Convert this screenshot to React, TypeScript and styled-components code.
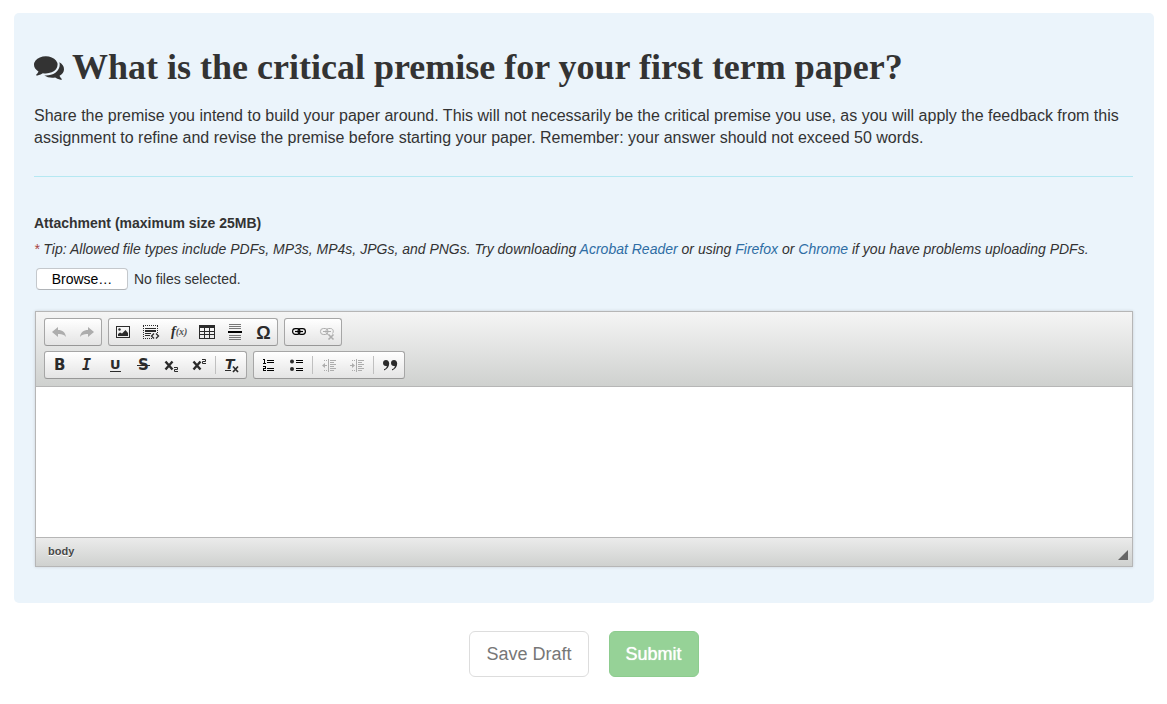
import React from "react";
import styled, { createGlobalStyle } from "styled-components";

const sans = `"Liberation Sans", Arial, sans-serif`;

const GlobalStyle = createGlobalStyle`
  *, *::before, *::after { box-sizing: border-box; }
  body {
    margin: 0;
    background: #fff;
    color: #333;
    font: 14px/22px ${sans};
  }
`;

const Page = styled.main`
  padding: 13px 13px 28px 14px;
`;

const Panel = styled.section`
  padding: 34px 21px 36px 20px;
  border-radius: 5px;
  background: #ebf4fb;
`;

const Title = styled.h1`
  display: flex;
  align-items: center;
  gap: 8px;
  margin: 0;
  font: bold 36px/40px "Liberation Serif", "Times New Roman", serif;
`;

const TitleIcon = styled.svg`
  flex: none;
  width: 30px;
  height: 30px;
  fill: #333;
`;

const Prompt = styled.p`
  margin: 18px 0 27px;
  font-size: 16px;
`;

const Divider = styled.hr`
  height: 1px;
  margin: 0 0 35px;
  border: 0;
  background: #b5e8f2;
`;

const FieldLabel = styled.label`
  display: block;
  font-weight: bold;
`;

const Tip = styled.p`
  margin: 4px 0 8px;
  font-style: italic;
`;

const Star = styled.span`
  color: #a94442;
`;

const TipLink = styled.a`
  color: #2e6da4;
  text-decoration: none;
`;

const FileRow = styled.div`
  position: relative;
  display: flex;
  align-items: center;
  gap: 6px;
  margin: 0 0 21px 2px;
`;

const FileInput = styled.input`
  position: absolute;
  width: 1px;
  height: 1px;
  opacity: 0;
`;

const BrowseButton = styled.button`
  width: 92px;
  height: 22px;
  padding: 0;
  border: 1px solid #c4c8cc;
  border-bottom-color: #b0b4b8;
  border-radius: 4px;
  background: #fff;
  color: #000;
  font: 14px/20px ${sans};
`;

const Editor = styled.div`
  margin-left: 1px;
  border: 1px solid #b6b6b6;
  box-shadow: 0 0 3px rgba(0, 0, 0, 0.15);
`;

const ToolbarArea = styled.div`
  display: flex;
  flex-direction: column;
  gap: 5px;
  padding: 6px 8px 7px;
  border-bottom: 1px solid #b6b6b6;
  background: linear-gradient(#f5f5f5, #cfd1cf);
`;

const ToolbarRow = styled.div`
  display: flex;
  gap: 6px;
`;

const Group = styled.div`
  display: flex;
  align-items: center;
  height: 28px;
  border: 1px solid #a6a6a6;
  border-bottom-color: #979797;
  border-radius: 3px;
  background: linear-gradient(#fff, #e4e4e4);
`;

const Tool = styled.button`
  width: 28px;
  height: 26px;
  padding: 5px 6px;
  border: 0;
  background: none;
  color: #2b2b2b;
  line-height: 0;

  &:disabled { color: #adadad; }
`;

const Separator = styled.span`
  width: 1px;
  height: 18px;
  margin: 0 2px;
  background: #c0c0c0;
`;

const Glyph = styled.svg`
  display: block;
  width: 16px;
  height: 16px;
  overflow: visible;
  fill: currentColor;
  stroke: none;
`;

const Content = styled.textarea`
  display: block;
  width: 100%;
  height: 150px;
  padding: 12px;
  border: 0;
  outline: 0;
  resize: none;
  background: #fff;
  font: 14px/22px ${sans};
`;

const StatusBar = styled.div`
  display: flex;
  justify-content: space-between;
  align-items: flex-end;
  height: 29px;
  padding: 0 4px 6px 12px;
  border-top: 1px solid #b6b6b6;
  background: linear-gradient(#ebebeb, #cfd1cf);
`;

const PathItem = styled.a`
  color: #484848;
  font: bold 11px/18px ${sans};
  text-decoration: none;
  text-shadow: 0 1px 0 #fff;
`;

const Resizer = styled.svg`
  width: 10px;
  height: 10px;
  fill: #666;
`;

const Actions = styled.div`
  display: flex;
  justify-content: center;
  gap: 20px;
  margin-top: 28px;
`;

const ActionButton = styled.button<{ $primary?: boolean }>`
  height: 46px;
  padding: 0 16px;
  border: 1px solid ${(p) => (p.$primary ? "#8dcc8f" : "#ddd")};
  border-radius: 6px;
  background: ${(p) => (p.$primary ? "#96d297" : "#fff")};
  color: ${(p) => (p.$primary ? "#fff" : "#777")};
  font: 18px/24px ${sans};
  text-shadow: ${(p) => (p.$primary ? "0 0 1px #fff" : "none")};
`;

const dv = "DejaVu Sans";

const icons: Record<string, React.ReactNode> = {
  undo: <path d="M1 8 7 3v3c4.500 0 7.500 2.500 8 7-2-2.500-4.500-3.200-8-3v3z" />,
  redo: <path d="M15 8 9 3v3c-4.500 0-7.500 2.500-8 7 2-2.500 4.500-3.200 8-3v3z" />,
  image: (
    <>
      <path fillRule="evenodd" d="M1 2h14v12H1zM2 3v10h12V3z" />
      <circle cx="4.500" cy="5.500" r="1.200" />
      <path d="M3 12V10l2-1.500 2 1L10.500 6 13 9v3z" />
    </>
  ),
  div: (
    <>
      <path d="M0 1.500h15M0 14.500h9M.5 2v12M14.500 2v7" fill="none" stroke="currentColor" strokeDasharray="1 1" />
      <path d="M2 4h11v1H2zM2 6h11v2H2zM2 9h6v1H2zM2 11h5v1H2z" />
      <path d="m11 9.500-2.500 2.500 2.500 2.500M13 9.500l2.500 2.500-2.500 2.500" fill="none" stroke="currentColor" strokeWidth="1.300" />
    </>
  ),
  math: (
    <text y="12" fontFamily="Liberation Serif" fontStyle="italic" fontWeight="bold" fontSize="14">
      f<tspan fontSize="10" dy="-1" fill="#555">(x)</tspan>
    </text>
  ),
  table: (
    <path
      fillRule="evenodd"
      d="M0 1h16v14H0zM1 4v3h4V4zM6 4v3h4V4zM11 4v3h4V4zM1 8v2h4V8zM6 8v2h4V8zM11 8v2h4V8zM1 11v3h4v-3zM6 11v3h4v-3zM11 11v3h4v-3z"
    />
  ),
  pagebreak: (
    <>
      <path fill="#777" d="M2 0h12v1H2zM2 2h12v1H2zM2 4h12v1H2zM2 11h12v1H2zM2 13h12v1H2zM2 15h12v1H2z" />
      <path fill="#000" d="M1 7h14v2H1z" />
    </>
  ),
  omega: (
    <text x="8.500" y="15" textAnchor="middle" fontFamily="Liberation Sans" fontWeight="bold" fontSize="18">Ω</text>
  ),
  link: (
    <g fill="none" stroke="#000" strokeWidth="1.200">
      <rect x="1.600" y="4.600" width="7.400" height="5.800" rx="2.800" />
      <rect x="7" y="4.600" width="7.400" height="5.800" rx="2.800" />
      <path d="M4 7.500h8" />
    </g>
  ),
  unlink: (
    <g fill="none" stroke="currentColor">
      <rect x="1.500" y="4.500" width="7.500" height="6" rx="2.800" />
      <path d="M13.500 9.500c1.600-2 .5-5-1.800-5H9.800C6 4.500 6 10.500 9.500 10.500M4 7.500h8" />
      <path d="m9.500 10.500 5 5m0-5-5 5" strokeWidth="1.600" />
    </g>
  ),
  bold: <text x="3" y="13" fontFamily={dv} fontWeight="bold" fontSize="15">B</text>,
  italic: <text x="3" y="13" fontFamily="DejaVu Sans Mono" fontStyle="italic" fontWeight="bold" fontSize="15">I</text>,
  underline: (
    <>
      <text x="3" y="12" fontFamily={dv} fontWeight="bold" fontSize="13">U</text>
      <path d="M3 14h11v1H3z" />
    </>
  ),
  strike: (
    <>
      <text x="3" y="13" fontFamily={dv} fontWeight="bold" fontSize="15">S</text>
      <path d="M2 8h13v1H2z" />
    </>
  ),
  sub: (
    <>
      <path d="m2.500 4.500 7 8m0-8-7 8" fill="none" stroke="currentColor" strokeWidth="2.400" />
      <path d="M11 10.500h3.500v2h-3v2H15" fill="none" stroke="currentColor" />
    </>
  ),
  sup: (
    <>
      <path d="m2.500 4.500 7 8m0-8-7 8" fill="none" stroke="currentColor" strokeWidth="2.400" />
      <path d="M11 2.500h3.500v2h-3v2H15" fill="none" stroke="currentColor" />
    </>
  ),
  clear: (
    <>
      <text x="1" y="12" fontFamily={dv} fontStyle="italic" fontWeight="bold" fontSize="14">T</text>
      <path d="M1 13h6v1H1z" />
      <path d="m9 9.500 5 5.500m0-5.500-5 5.500" fill="none" stroke="currentColor" strokeWidth="1.700" />
    </>
  ),
  numbered: (
    <path
      fill="#000"
      d="M3 2h2v4h1v1H3V6h1V3H3zM3 9h3v3H4v1h2v1H3v-3h2v-1H3zM7 3h7v1H7zM7 5h7v1H7zM7 11h7v1H7zM7 13h7v1H7z"
    />
  ),
  bulleted: (
    <>
      <circle cx="4" cy="4.500" r="2" />
      <circle cx="4" cy="12" r="2" />
      <path fill="#000" d="M8 3h7v1H8zM8 5h7v1H8zM8 11h7v1H8zM8 13h7v1H8z" />
    </>
  ),
  outdent: (
    <>
      <path d="M7 2h1v13H7zM9 3h6v1H9zM9 5h4v1H9zM9 7h6v1H9zM9 9h4v1H9zM9 11h6v1H9zM9 13h4v1H9zM3 8h3v1H3z" />
      <path d="M1 8.500 4 6v5z" />
      <path d="M3 3h1v1H3zM5 3h1v1H5zM3 13h1v1H3zM5 13h1v1H5z" />
    </>
  ),
  indent: (
    <>
      <path d="M7 2h1v13H7zM9 3h6v1H9zM9 5h4v1H9zM9 7h6v1H9zM9 9h4v1H9zM9 11h6v1H9zM9 13h4v1H9zM1 8h3v1H1z" />
      <path d="M6 8.500 3 6v5z" />
      <path d="M3 3h1v1H3zM5 3h1v1H5zM3 13h1v1H3zM5 13h1v1H5z" />
    </>
  ),
  quote: (
    <path d="M4 3c2 0 3.200 1.500 3.200 3.600 0 3.200-2 5.600-5.200 6.900v-1.200c1.700-.9 2.700-2 2.900-3.400-.3.100-.6.200-1 .2C2.200 9.100 1 7.800 1 6.100 1 4.300 2.200 3 4 3zm8 0c2 0 3.200 1.500 3.200 3.600 0 3.200-2 5.600-5.200 6.900v-1.200c1.700-.9 2.700-2 2.900-3.400-.3.100-.6.200-1 .2-1.700 0-2.900-1.300-2.900-3C9 4.300 10.200 3 12 3z" />
  ),
};

type ToolDef = { icon: string; label: string; off?: boolean } | "|";

const rows: ToolDef[][][] = [
  [
    [
      { icon: "undo", label: "Undo", off: true },
      { icon: "redo", label: "Redo", off: true },
    ],
    [
      { icon: "image", label: "Image" },
      { icon: "div", label: "Embed content" },
      { icon: "math", label: "Math" },
      { icon: "table", label: "Table" },
      { icon: "pagebreak", label: "Page break" },
      { icon: "omega", label: "Special character" },
    ],
    [
      { icon: "link", label: "Link" },
      { icon: "unlink", label: "Unlink", off: true },
    ],
  ],
  [
    [
      { icon: "bold", label: "Bold" },
      { icon: "italic", label: "Italic" },
      { icon: "underline", label: "Underline" },
      { icon: "strike", label: "Strikethrough" },
      { icon: "sub", label: "Subscript" },
      { icon: "sup", label: "Superscript" },
      "|",
      { icon: "clear", label: "Remove format" },
    ],
    [
      { icon: "numbered", label: "Numbered list" },
      { icon: "bulleted", label: "Bulleted list" },
      "|",
      { icon: "outdent", label: "Decrease indent", off: true },
      { icon: "indent", label: "Increase indent", off: true },
      "|",
      { icon: "quote", label: "Block quote" },
    ],
  ],
];

function ToolGroup({ tools }: { tools: ToolDef[] }) {
  return (
    <Group role="group">
      {tools.map((tool, i) =>
        tool === "|" ? (
          <Separator key={i} />
        ) : (
          <Tool key={i} type="button" aria-label={tool.label} disabled={tool.off}>
            <Glyph viewBox="0 0 16 16" aria-hidden="true">{icons[tool.icon]}</Glyph>
          </Tool>
        )
      )}
    </Group>
  );
}

export default function App() {
  const fileRef = React.useRef<HTMLInputElement>(null);
  const [status, setStatus] = React.useState("No files selected.");

  return (
    <>
      <GlobalStyle />
      <Page>
        <Panel>
          <Title>
            <TitleIcon viewBox="0 0 1792 1792" aria-hidden="true">
              <path d="M1408 768q0 139-94 257t-256.500 186.500-353.500 68.500q-86 0-176-16-124 88-278 128-36 9-86 16h-3q-11 0-20.500-8t-11.500-21q-1-3-1-6.500t.5-6.500 2-6l2.500-5 3.500-5.500 4-5 4.500-5 4-4.500q5-6 23-25t26-29.500 22.500-29 25-38.500 20.500-44q-124-72-195-177t-71-224q0-139 94-257t256.500-186.500 353.500-68.500 353.500 68.500 256.500 186.500 94 257zm384 256q0 120-71 224.500t-195 176.500q10 24 20.500 44t25 38.500 22.500 29 26 29.500 23 25q1 1 4 4.500t4.500 5 4 5 3.500 5.500l2.500 5 2 6 .5 6.500-1 6.500q-3 14-13 22t-22 7q-50-7-86-16-154-40-278-128-90 16-176 16-271 0-472-132 58 4 88 4 161 0 309-45t264-129q125-92 192-212t67-254q0-77-23-152 129 71 204 178t75 230z" />
            </TitleIcon>
            What is the critical premise for your first term paper?
          </Title>
          <Prompt>
            Share the premise you intend to build your paper around. This will not necessarily be the critical
            premise you use, as you will apply the feedback from this assignment to refine and revise the premise
            before starting your paper. Remember: your answer should not exceed 50 words.
          </Prompt>
          <Divider />
          <FieldLabel htmlFor="attachment">Attachment (maximum size 25MB)</FieldLabel>
          <Tip>
            <Star>*</Star> Tip: Allowed file types include PDFs, MP3s, MP4s, JPGs, and PNGs. Try downloading{" "}
            <TipLink href="#acrobat">Acrobat Reader</TipLink> or using <TipLink href="#firefox">Firefox</TipLink> or{" "}
            <TipLink href="#chrome">Chrome</TipLink> if you have problems uploading PDFs.
          </Tip>
          <FileRow>
            <FileInput
              ref={fileRef}
              id="attachment"
              type="file"
              tabIndex={-1}
              onChange={(e) => setStatus(e.target.files?.[0]?.name ?? "No files selected.")}
            />
            <BrowseButton type="button" onClick={() => fileRef.current?.click()}>Browse…</BrowseButton>
            <span>{status}</span>
          </FileRow>
          <Editor>
            <ToolbarArea role="toolbar" aria-label="Editor toolbar">
              {rows.map((groups, r) => (
                <ToolbarRow key={r}>
                  {groups.map((tools, g) => (
                    <ToolGroup key={g} tools={tools} />
                  ))}
                </ToolbarRow>
              ))}
            </ToolbarArea>
            <Content aria-label="Your answer" />
            <StatusBar>
              <PathItem href="#body">body</PathItem>
              <Resizer viewBox="0 0 10 10" aria-hidden="true">
                <path d="M10 0v10H0z" />
              </Resizer>
            </StatusBar>
          </Editor>
        </Panel>
        <Actions>
          <ActionButton type="button">Save Draft</ActionButton>
          <ActionButton type="submit" $primary>Submit</ActionButton>
        </Actions>
      </Page>
    </>
  );
}
